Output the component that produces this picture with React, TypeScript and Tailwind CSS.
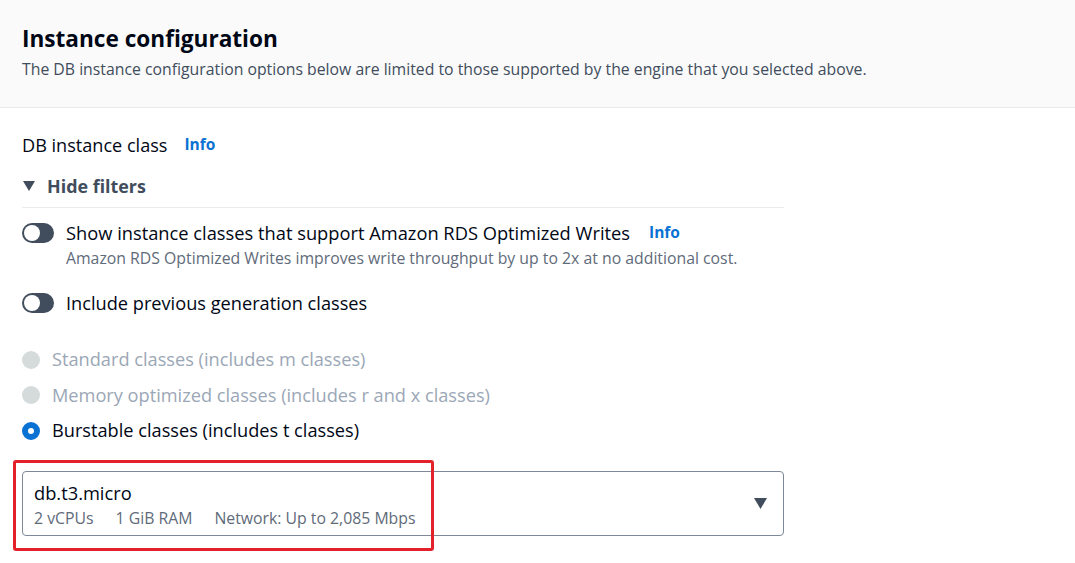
import { FC } from 'react';

const font = { fontFamily: '"Open Sans", "Noto Sans", Arial, sans-serif' };

const Toggle: FC = () => (
  <span className="relative inline-block h-[20px] w-[32px] shrink-0 rounded-full bg-[#414d5c]">
    <span className="absolute left-[2px] top-[2px] h-[16px] w-[16px] rounded-full bg-white" />
  </span>
);

const Radio: FC<{ checked?: boolean; disabled?: boolean; label: string }> = ({ checked, disabled, label }) => (
  <div className="flex h-[35.5px] items-center gap-[12px]">
    {checked ? (
      <span className="h-[18px] w-[18px] shrink-0 rounded-full border-[6px] border-[#0972d3] bg-white" />
    ) : (
      <span className="h-[18px] w-[18px] shrink-0 rounded-full bg-[#d5dbdb]" />
    )}
    <span className={disabled ? 'text-[18.2px] text-[#9ba7b6]' : 'text-[18.2px] text-[#000716]'}>{label}</span>
  </div>
);

const App: FC = () => {
  return (
    <div className="relative h-[563px] w-[1075px] overflow-hidden bg-white" style={font}>
      <div className="h-[108px] border-b border-[#e9ebed] bg-[#fafafa] px-[22px] pt-[24px]">
        <h2 className="text-[22.6px] font-bold leading-[30px] text-[#000716]">Instance configuration</h2>
        <p className="mt-[4px] text-[15.8px] leading-[22px] text-[#414d5c]">
          The DB instance configuration options below are limited to those supported by the engine that you selected above.
        </p>
      </div>

      <div className="w-[784px] pl-[22px] pt-[25px]">
        <div className="flex items-center gap-[17px]">
          <span className="text-[18.1px] leading-[24px] text-[#000716]">DB instance class</span>
          <span className="text-[15.5px] font-bold text-[#0972d3]">Info</span>
        </div>

        <div className="mt-[17px] flex items-center gap-[11px] border-b border-[#e9ebed] pb-[9px]">
          <svg width="14" height="12" viewBox="0 0 14 12">
            <path d="M1 1h12L7 11z" fill="#414d5c" />
          </svg>
          <span className="text-[17.9px] font-bold leading-[24px] text-[#414d5c]">Hide filters</span>
        </div>

        <div className="mt-[12px] flex gap-[12px]">
          <div className="pt-[3px]">
            <Toggle />
          </div>
          <div>
            <div className="flex items-center gap-[19px]">
              <span className="text-[18.3px] leading-[26px] text-[#000716]">
                Show instance classes that support Amazon RDS Optimized Writes
              </span>
              <span className="text-[15.5px] font-bold text-[#0972d3]">Info</span>
            </div>
            <div className="text-[15.8px] leading-[24px] text-[#5f6b7a]">
              Amazon RDS Optimized Writes improves write throughput by up to 2x at no additional cost.
            </div>
          </div>
        </div>

        <div className="mt-[20px] flex items-center gap-[12px]">
          <Toggle />
          <span className="text-[18.2px] leading-[26px] text-[#000716]">Include previous generation classes</span>
        </div>

        <div className="mt-[26px]">
          <Radio disabled label="Standard classes (includes m classes)" />
          <Radio disabled label="Memory optimized classes (includes r and x classes)" />
          <Radio checked label="Burstable classes (includes t classes)" />
        </div>

        <div className="mt-[22px] flex h-[65px] items-center justify-between rounded-[4px] border border-[#7d8998] pl-[11px] pr-[15px]">
          <div className="pt-[4px]">
            <div className="text-[18.3px] leading-[26px] text-[#000716]">db.t3.micro</div>
            <div className="flex gap-[22px] text-[15.8px] leading-[25px] text-[#5f6b7a]">
              <span>2 vCPUs</span>
              <span>1 GiB RAM</span>
              <span>Network: Up to 2,085 Mbps</span>
            </div>
          </div>
          <svg width="15" height="13" viewBox="0 0 15 13">
            <path d="M1 1h13L7.5 12z" fill="#414d5c" />
          </svg>
        </div>
      </div>

      <div className="absolute left-[13px] top-[460px] h-[91px] w-[421px] rounded-[3px] border-[3px] border-[#e3212b]" />
    </div>
  );
};

export default App;
